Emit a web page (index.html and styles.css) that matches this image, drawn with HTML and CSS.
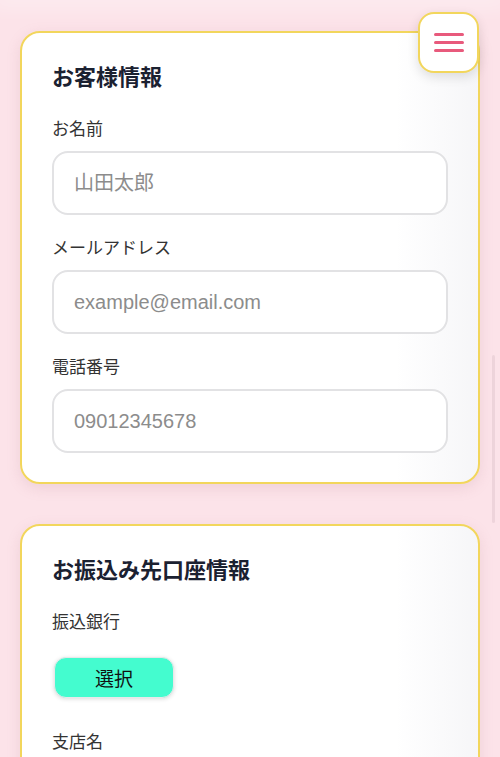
FILE: index.html
```html
<!DOCTYPE html>
<html lang="ja">
<head>
    <meta charset="UTF-8">
    <meta name="viewport" content="width=device-width, initial-scale=1.0">
    <title>お振込み情報入力</title>
    <link rel="stylesheet" href="styles.css">
</head>
<body>
    <div class="prev-edge"></div>

    <button class="menu-btn" aria-label="メニュー">
        <span></span>
        <span></span>
        <span></span>
    </button>

    <div class="page">
        <section class="card">
            <h2>お客様情報</h2>
            <div class="field">
                <label for="name">お名前</label>
                <input id="name" type="text" placeholder="山田太郎">
            </div>
            <div class="field">
                <label for="email">メールアドレス</label>
                <input id="email" type="email" placeholder="example@email.com">
            </div>
            <div class="field">
                <label for="tel">電話番号</label>
                <input id="tel" type="tel" placeholder="09012345678">
            </div>
        </section>

        <section class="card">
            <h2>お振込み先口座情報</h2>
            <div class="field">
                <label>振込銀行</label>
                <button class="select-btn">選択</button>
            </div>
            <div class="field">
                <label>支店名</label>
            </div>
        </section>
    </div>

    <div class="scroll-thumb"></div>
</body>
</html>
```

FILE: styles.css
```css
body {
    margin: 0;
    background-color: #fce3e9;
    font-family: "Noto Sans CJK JP", "Liberation Sans", sans-serif;
    color: #333;
    overflow: hidden;
}
.prev-edge {
    height: 0;
    box-shadow: 0 0 18px 8px rgba(255, 255, 255, 0.35);
}
.page {
    padding: 31px 20px 40px;
    display: flex;
    flex-direction: column;
    gap: 40px;
}
.card {
    background: linear-gradient(90deg, #ffffff 82%, #f6f6f8);
    border: 2px solid #f2d65c;
    border-radius: 20px;
    padding: 28px 30px 29px;
    box-shadow: 0 4px 14px rgba(180, 120, 140, 0.18);
}
.card h2 {
    margin: 0;
    font-size: 22px;
    line-height: 29px;
    font-weight: bold;
    color: #1b2131;
}
.field {
    margin-top: 26px;
}
.field + .field {
    margin-top: 20px;
}
.field label {
    display: block;
    font-size: 17px;
    line-height: 24px;
    color: #333;
    margin-bottom: 11px;
}
.field input {
    box-sizing: border-box;
    width: 100%;
    height: 64px;
    padding: 0 20px;
    border: 2px solid #e2e2e4;
    border-radius: 16px;
    background: #fff;
    font-family: "Liberation Sans", "Noto Sans CJK JP", sans-serif;
    font-size: 20px;
    color: #333;
    outline: none;
}
.field input::placeholder {
    color: #8c8c8c;
}
.field input#name::placeholder {
    font-family: "Noto Sans CJK JP", sans-serif;
}
.select-btn {
    display: block;
    margin: 24px 0 0 2px;
    width: 120px;
    height: 41px;
    border: 1px solid #e8e8ea;
    border-radius: 12px;
    background-color: #44fccf;
    box-shadow: 0 1px 4px rgba(0, 0, 0, 0.15);
    font-family: "Noto Sans CJK JP", sans-serif;
    font-size: 19px;
    color: #111;
    cursor: pointer;
}
.field:has(.select-btn) label {
    margin-bottom: 0;
}
.field:has(.select-btn) + .field {
    margin-top: 31px;
}
.menu-btn {
    position: fixed;
    top: 12px;
    right: 21px;
    width: 61px;
    height: 61px;
    box-sizing: border-box;
    border: 2px solid #f2d65c;
    border-radius: 16px;
    background: #fff;
    box-shadow: 0 4px 12px rgba(0, 0, 0, 0.12);
    display: flex;
    flex-direction: column;
    align-items: center;
    justify-content: center;
    gap: 5px;
    padding: 0;
    cursor: pointer;
}
.menu-btn span {
    display: block;
    width: 30px;
    height: 3px;
    border-radius: 2px;
    background-color: #e85a7c;
}
.scroll-thumb {
    position: fixed;
    top: 355px;
    right: 5px;
    width: 3px;
    height: 168px;
    border-radius: 2px;
    background-color: rgba(120, 90, 100, 0.1);
}
```
